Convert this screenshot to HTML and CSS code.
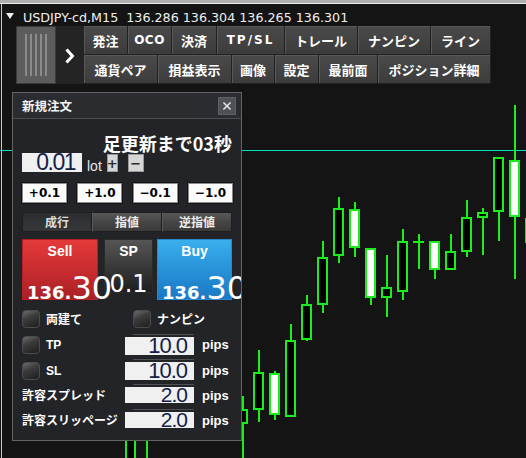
FILE: index.html
```html
<!DOCTYPE html>
<html lang="ja">
<head>
<meta charset="utf-8">
<title>USDJPY-cd,M15</title>
<link rel="stylesheet" href="styles.css">
</head>
<body>
<div class="screen">
  <svg class="chart" width="526" height="458" viewBox="0 0 526 458" shape-rendering="crispEdges">
    <rect x="0" y="150" width="526" height="1" fill="#00e6be"/>
    <g fill="#1aee1a">
      <rect x="130" y="420" width="2" height="60"/>
      <rect x="146" y="390" width="2" height="80"/>
      <rect x="242" y="396" width="2" height="74"/>
      <rect x="258" y="350" width="2" height="72"/>
      <rect x="274" y="371" width="2" height="49"/>
      <rect x="290" y="324" width="2" height="93"/>
      <rect x="306" y="295" width="2" height="46"/>
      <rect x="322" y="241" width="2" height="72"/>
      <rect x="338" y="197" width="2" height="66"/>
      <rect x="354" y="202" width="2" height="55"/>
      <rect x="370" y="248" width="2" height="57"/>
      <rect x="386" y="255" width="2" height="62"/>
      <rect x="402" y="229" width="2" height="71"/>
      <rect x="418" y="234" width="2" height="35"/>
      <rect x="434" y="241" width="2" height="38"/>
      <rect x="450" y="234" width="2" height="36"/>
      <rect x="466" y="200" width="2" height="57"/>
      <rect x="482" y="208" width="2" height="47"/>
      <rect x="498" y="157" width="2" height="84"/>
      <rect x="514" y="105" width="2" height="174"/>
      <rect x="530" y="200" width="2" height="60"/>
      <rect x="413" y="241" width="11" height="2"/>
    </g>
    <g stroke="#1aee1a" stroke-width="2">
      <rect x="126" y="431" width="9" height="43" fill="#000"/>
      <rect x="142" y="401" width="9" height="33" fill="#000"/>
      <rect x="238" y="410" width="9" height="13" fill="#000"/>
      <rect x="254" y="373" width="9" height="36" fill="#000"/>
      <rect x="270" y="374" width="9" height="40" fill="#fff"/>
      <rect x="286" y="341" width="9" height="75" fill="#000"/>
      <rect x="302" y="305" width="9" height="34" fill="#000"/>
      <rect x="318" y="258" width="9" height="46" fill="#000"/>
      <rect x="334" y="209" width="9" height="46" fill="#000"/>
      <rect x="350" y="210" width="9" height="37" fill="#fff"/>
      <rect x="366" y="249" width="9" height="48" fill="#fff"/>
      <rect x="382" y="288" width="9" height="9" fill="#000"/>
      <rect x="398" y="242" width="9" height="49" fill="#000"/>
      <rect x="430" y="242" width="9" height="27" fill="#fff"/>
      <rect x="446" y="252" width="9" height="17" fill="#000"/>
      <rect x="462" y="218" width="9" height="33" fill="#000"/>
      <rect x="478" y="213" width="9" height="4" fill="#000"/>
      <rect x="494" y="158" width="9" height="53" fill="#000"/>
      <rect x="510" y="161" width="9" height="55" fill="#fff"/>
      <rect x="526" y="219" width="9" height="23" fill="#000"/>
    </g>
  </svg>

  <div class="topstrip"></div>
  <div class="main">
    <div class="titlebar">
      <span class="tri"></span>
      <span class="ttext">USDJPY-cd,M15  136.286 136.304 136.265 136.301</span>
    </div>

    <div class="toolbar">
      <div class="grip"><i></i><i></i><i></i><i></i><i></i></div>
      <div class="expander">
        <svg width="28" height="58" viewBox="0 0 28 58"><path d="M11.5 24.5 L16.5 30 L11.5 35.5" fill="none" stroke="#ffffff" stroke-width="3" stroke-linecap="square"/></svg>
      </div>
      <div class="btns">
        <div class="brow">
          <div class="tb w44">発注</div>
          <div class="tb w44 lat">OCO</div>
          <div class="tb w45">決済</div>
          <div class="tb w68 lat wide">TP/SL</div>
          <div class="tb w73">トレール</div>
          <div class="tb w73">ナンピン</div>
          <div class="tb w60">ライン</div>
        </div>
        <div class="brow">
          <div class="tb w74">通貨ペア</div>
          <div class="tb w74">損益表示</div>
          <div class="tb w43">画像</div>
          <div class="tb w44">設定</div>
          <div class="tb w59">最前面</div>
          <div class="tb w113">ポジション詳細</div>
        </div>
      </div>
    </div>
  </div>

  <div class="panel">
    <div class="phead">
      <span class="ptitle">新規注文</span>
      <span class="close"><svg width="18" height="18" viewBox="0 0 18 18"><path d="M5 5 L13 13 M13 5 L5 13" stroke="#e2e2e2" stroke-width="1.8" fill="none"/></svg></span>
    </div>
    <div class="pbody">
      <div class="countdown">足更新まで03秒</div>
      <div class="lotrow">
        <div class="lotbox">0.01</div>
        <span class="lot">lot</span>
        <span class="pm plus">+</span>
        <span class="pm minus">−</span>
      </div>
      <div class="incrow">
        <div class="inc">+0.1</div>
        <div class="inc">+1.0</div>
        <div class="inc">−0.1</div>
        <div class="inc">−1.0</div>
      </div>
      <div class="tabs">
        <div class="tab on">成行</div>
        <div class="tab">指値</div>
        <div class="tab">逆指値</div>
      </div>
      <div class="trade">
        <div class="sell">
          <div class="tlabel">Sell</div>
          <div class="price"><b>136.</b>30</div>
        </div>
        <div class="sp">
          <div class="tlabel">SP</div>
          <div class="spval">0.1</div>
        </div>
        <div class="buy">
          <div class="tlabel">Buy</div>
          <div class="price"><b>136.</b>30</div>
        </div>
      </div>
      <div class="opts">
        <div class="opt r1">
          <div class="cell c111"><span class="cb"></span><span class="cbl">両建て</span></div>
          <div class="cell"><span class="cb"></span><span class="cbl">ナンピン</span></div>
        </div>
        <div class="opt r2">
          <div class="cell c103"><span class="cb"></span><span class="cbl lat">TP</span></div>
          <div class="field f2"><div class="inp">10.0</div></div>
          <span class="pips">pips</span>
        </div>
        <div class="opt r3">
          <div class="cell c103"><span class="cb"></span><span class="cbl lat">SL</span></div>
          <div class="field f1"><div class="inp">10.0</div></div>
          <span class="pips">pips</span>
        </div>
        <div class="opt r4">
          <div class="cell c103"><span class="lbl">許容スプレッド</span></div>
          <div class="field f1"><div class="inp sm">2.0</div></div>
          <span class="pips">pips</span>
        </div>
        <div class="opt r5">
          <div class="cell c103"><span class="lbl">許容スリッページ</span></div>
          <div class="field f1"><div class="inp sm">2.0</div></div>
          <span class="pips">pips</span>
        </div>
      </div>
    </div>
  </div>
</div>
</body>
</html>
```

FILE: styles.css
```css
* { box-sizing: border-box; margin: 0; padding: 0; }
html, body { width: 526px; height: 458px; overflow: hidden; background: #141414; }
body { font-family: "Noto Sans CJK JP", "Noto Sans", sans-serif; color: #fff; }

.screen { position: relative; width: 526px; height: 458px; overflow: hidden; background: #141414; }
.chart { position: absolute; left: 0; top: 0; }

.topstrip { position: relative; height: 4px; background: #b0b0b0; border-bottom: 1px solid #ececec; }
.main { position: relative; margin-left: 1px; height: 454px; border-left: 1px solid #cfcfcf; }

/* title */
.titlebar { display: flex; align-items: flex-start; height: 22px; padding: 6px 0 0 4px; }
.tri { width: 0; height: 0; margin-top: 3px; border-left: 4px solid transparent; border-right: 4px solid transparent; border-top: 6px solid #eeeeee; }
.ttext { margin-left: 9px; font-family: "DejaVu Sans", sans-serif; font-size: 12.7px; line-height: 15px; white-space: pre; color: #f0f0f0; }

/* toolbar */
.toolbar { display: flex; margin-left: 14px; height: 58px; }
.grip { width: 40px; display: flex; justify-content: center; gap: 3px; padding: 7px 0; background: #5c5c5c; border: 1px solid #3a3a3a; }
.grip i { width: 2px; background: #8c8c8c; }
.expander { width: 28px; background: #242424; }
.expander svg { display: block; }
.btns { width: 407px; display: flex; flex-direction: column; }
.brow { display: flex; height: 29px; }
.tb { display: flex; align-items: center; justify-content: center; height: 29px; font-size: 13px; font-weight: 700; line-height: 1; color: #fff; background: linear-gradient(#4a4a4a, #3c3c3c); border-right: 1px solid #222222; border-bottom: 1px solid #222222; box-shadow: inset 1px 1px 0 #585858; }
.tb.lat { font-family: "DejaVu Sans", sans-serif; font-size: 12px; letter-spacing: 0.5px; }
.tb.wide { letter-spacing: 2px; }
.w43 { width: 43px; } .w44 { width: 44px; } .w45 { width: 45px; } .w59 { width: 59px; }
.w60 { width: 60px; } .w68 { width: 68px; } .w73 { width: 73px; } .w74 { width: 74px; } .w113 { width: 113px; }

/* panel */
.panel { position: absolute; left: 12px; top: 92px; width: 230px; height: 349px; border: 1px solid #646464; background: #232428; overflow: hidden; }
.phead { height: 26px; display: flex; align-items: center; justify-content: space-between; padding: 0 5px 0 9px; background: #2b2c30; border-bottom: 1px solid #4b4c50; }
.ptitle { font-size: 12.5px; font-weight: 700; line-height: 16px; color: #f2f2f2; }
.close { width: 18px; height: 18px; background: #505156; border: 1px solid #5e5f63; display: flex; align-items: center; justify-content: center; }
.close svg { display: block; }

.pbody { padding: 15px 8px 0 9px; }
.countdown { height: 18px; font-size: 18px; font-weight: 700; line-height: 18px; text-align: right; padding-right: 1px; color: #fff; }

.lotrow { display: flex; align-items: flex-end; height: 19px; margin-top: 1px; }
.lotbox { width: 60px; height: 19px; background: #f0f0f0; color: #14204a; font-family: "Liberation Sans", sans-serif; font-size: 23px; line-height: 19px; text-align: right; padding-right: 7px; letter-spacing: -1.5px; white-space: nowrap; }
.lot { margin-left: 5px; margin-bottom: -1px; font-family: "Liberation Sans", sans-serif; font-size: 14px; line-height: 14px; color: #e8e8e8; }
.pm { height: 18px; display: flex; align-items: center; justify-content: center; background: #d6d6d6; border: 1px solid #9a9a9a; color: #2a2a2a; font-family: "DejaVu Sans", sans-serif; font-weight: 700; font-size: 13px; line-height: 1; }
.plus { width: 11px; margin-left: 5px; }
.minus { width: 16px; margin-left: 10px; }

.incrow { display: flex; justify-content: space-between; height: 20px; margin-top: 11px; }
.inc { width: 45px; height: 20px; display: flex; align-items: center; justify-content: center; background: #fbfbfb; border: 1px solid #8a8a8a; box-shadow: 0 0 0 1px #151515; color: #000; font-family: "DejaVu Sans", sans-serif; font-weight: 700; font-size: 12px; line-height: 1; }

.tabs { display: flex; width: 210px; height: 20px; margin-top: 9px; }
.tab { flex: 1; display: flex; align-items: center; justify-content: center; font-size: 12px; font-weight: 700; line-height: 1; color: #ececec; background: linear-gradient(#585858, #444444 55%, #3a3a3a); border: 1px solid #1e1e1e; border-left: 1px solid #5a5a5a; }
.tab.on { background: linear-gradient(#2c2d30, #36373b); color: #dcdcdc; border-left: 1px solid #1e1e1e; }

.trade { display: flex; align-items: flex-start; height: 61px; margin-top: 7px; }
.sell, .buy, .sp { white-space: nowrap; }
.sell { width: 76px; height: 61px; padding-left: 4px; background: linear-gradient(#e43a3a, #cc2e30 45%, #a82026); border: 1px solid #b81e22; }
.sp { width: 49px; height: 54px; margin-left: 6px; background: linear-gradient(#555555, #3a3a3a 50%, #1e1e1e); border: 1px solid #2a2a2a; }
.buy { width: 75px; height: 61px; margin-left: 4px; padding-left: 4px; background: linear-gradient(#3ab0ee, #2892d8 50%, #1a78c4); border: 1px solid #2a88d0; }
.tlabel { margin-top: 4px; height: 15px; font-family: "Liberation Sans", sans-serif; font-weight: 700; font-size: 14px; line-height: 15px; text-align: center; color: #fff; }
.sell .tlabel, .buy .tlabel { margin-left: -4px; }
.price { position: relative; z-index: 2; margin-top: 13px; font-family: "DejaVu Sans", sans-serif; font-size: 32px; line-height: 32px; color: #fff; }
.price b { font-size: 18px; font-weight: 700; }
.spval { margin-top: 13px; font-family: "DejaVu Sans", sans-serif; font-size: 24px; line-height: 24px; text-align: center; color: #fff; }

.opts { padding-top: 6px; }
.opt { display: flex; align-items: flex-start; }
.r1, .r2 { height: 26px; }
.r3, .r4, .r5 { height: 25px; }
.cell { display: flex; align-items: flex-start; }
.c111 { width: 111px; }
.c103 { width: 103px; }
.cb { flex: none; width: 18px; height: 18px; margin-top: 4px; border-radius: 4px; border: 1px solid #4c4c4c; background: linear-gradient(155deg, #6c6c6c 0%, #3c3c3c 40%, #1e1e1e 100%); }
.cbl { margin-left: 6px; margin-top: 4px; font-size: 12px; font-weight: 700; line-height: 18px; color: #fff; }
.cbl.lat { font-family: "Liberation Sans", sans-serif; font-size: 12px; }
.lbl { margin-top: 3px; font-size: 12px; font-weight: 700; line-height: 18px; color: #fff; white-space: nowrap; }

.field { width: 69px; display: flex; flex-direction: column; }
.field::before { content: ""; height: 1px; margin-left: 8px; margin-bottom: 2px; background: #505155; }
.f2 { margin-top: 2px; }
.f1 { margin-top: 1px; }
.inp { height: 18px; background: #f0f0f0; color: #14204a; font-family: "Liberation Sans", sans-serif; font-size: 22px; line-height: 18px; text-align: right; padding-right: 7px; letter-spacing: -1px; white-space: nowrap; }
.inp.sm { height: 16px; line-height: 16px; font-size: 21px; }
.pips { margin-left: 8px; margin-top: 4px; font-family: "Liberation Sans", sans-serif; font-weight: 700; font-size: 13px; line-height: 18px; color: #fff; }
```
